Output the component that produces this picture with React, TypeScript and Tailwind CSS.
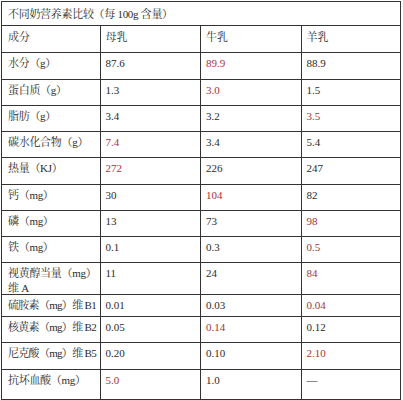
const FONT = "font-['Liberation_Serif','Noto_Serif_CJK_SC','Noto_Sans_CJK_SC',serif]";

type Cell = { v: string; red?: boolean };
type Row = { label: React.ReactNode; h: string; cells: Cell[]; tight?: boolean };

const rows: Row[] = [
  { label: "水分（g）", h: "h-[27px]", cells: [{ v: "87.6" }, { v: "89.9", red: true }, { v: "88.9" }] },
  { label: "蛋白质（g）", h: "h-[26px]", cells: [{ v: "1.3" }, { v: "3.0", red: true }, { v: "1.5" }] },
  { label: "脂肪（g）", h: "h-[26px]", cells: [{ v: "3.4" }, { v: "3.2" }, { v: "3.5", red: true }] },
  { label: "碳水化合物（g）", h: "h-[26px]", cells: [{ v: "7.4", red: true }, { v: "3.4" }, { v: "5.4" }] },
  { label: "热量（KJ）", h: "h-[27px]", cells: [{ v: "272", red: true }, { v: "226" }, { v: "247" }] },
  { label: "钙（mg）", h: "h-[26px]", cells: [{ v: "30" }, { v: "104", red: true }, { v: "82" }] },
  { label: "磷（mg）", h: "h-[26px]", cells: [{ v: "13" }, { v: "73" }, { v: "98", red: true }] },
  { label: "铁（mg）", h: "h-[26px]", cells: [{ v: "0.1" }, { v: "0.3" }, { v: "0.5", red: true }] },
  {
    label: (
      <>
        视黄醇当量（mg）
        <br />
        维 A
      </>
    ),
    h: "h-[32px]",
    cells: [{ v: "11" }, { v: "24" }, { v: "84", red: true }],
  },
  { label: "硫胺素（mg）维 B1", h: "h-[22px]", tight: true, cells: [{ v: "0.01" }, { v: "0.03" }, { v: "0.04", red: true }] },
  { label: "核黄素（mg）维 B2", h: "h-[26px]", tight: true, cells: [{ v: "0.05" }, { v: "0.14", red: true }, { v: "0.12" }] },
  { label: "尼克酸（mg）维 B5", h: "h-[27px]", tight: true, cells: [{ v: "0.20" }, { v: "0.10" }, { v: "2.10", red: true }] },
  { label: "抗坏血酸（mg）", h: "h-[29px]", cells: [{ v: "5.0", red: true }, { v: "1.0" }, { v: "—" }] },
];

const widths = ["w-[99px]", "w-[101px]", "w-[101px]", "w-[99px]"];

export default function App() {
  return (
    <div className={`bg-white w-[403px] h-[400px] pt-px pl-px text-[11px] leading-[15px] text-[#2b2b2b] ${FONT}`}>
      <div className="w-[400px] border border-[#333]">
        <div className="h-[24px] border-b border-[#333] pl-[6px] pt-[5px] whitespace-nowrap tracking-[-0.3px]">
          不同奶营养素比较（每 100g 含量）
        </div>
        <div className="flex h-[27px] border-b border-[#333]">
          {["成分", "母乳", "牛乳", "羊乳"].map((t, i) => (
            <div
              key={t}
              className={`${widths[i]} ${i < 3 ? "border-r border-[#333]" : ""} ${i === 0 ? "pl-[6px]" : "pl-[5px]"} pt-[4px]`}
            >
              {t}
            </div>
          ))}
        </div>
        {rows.map((r, ri) => (
          <div
            key={ri}
            className={`flex ${r.h} ${ri < rows.length - 1 ? "border-b border-[#333]" : ""}`}
          >
            <div
              className={`${widths[0]} border-r border-[#333] pl-[6px] pt-[3px] whitespace-nowrap overflow-hidden ${r.tight ? "tracking-[-0.7px]" : "tracking-[-0.3px]"}`}
            >
              {r.label}
            </div>
            {r.cells.map((c, ci) => (
              <div
                key={ci}
                className={`${widths[ci + 1]} ${ci < 2 ? "border-r border-[#333]" : ""} pl-[5px] pt-[3px] ${c.red ? "text-[#a8323a]" : ""}`}
              >
                {c.v}
              </div>
            ))}
          </div>
        ))}
      </div>
    </div>
  );
}
